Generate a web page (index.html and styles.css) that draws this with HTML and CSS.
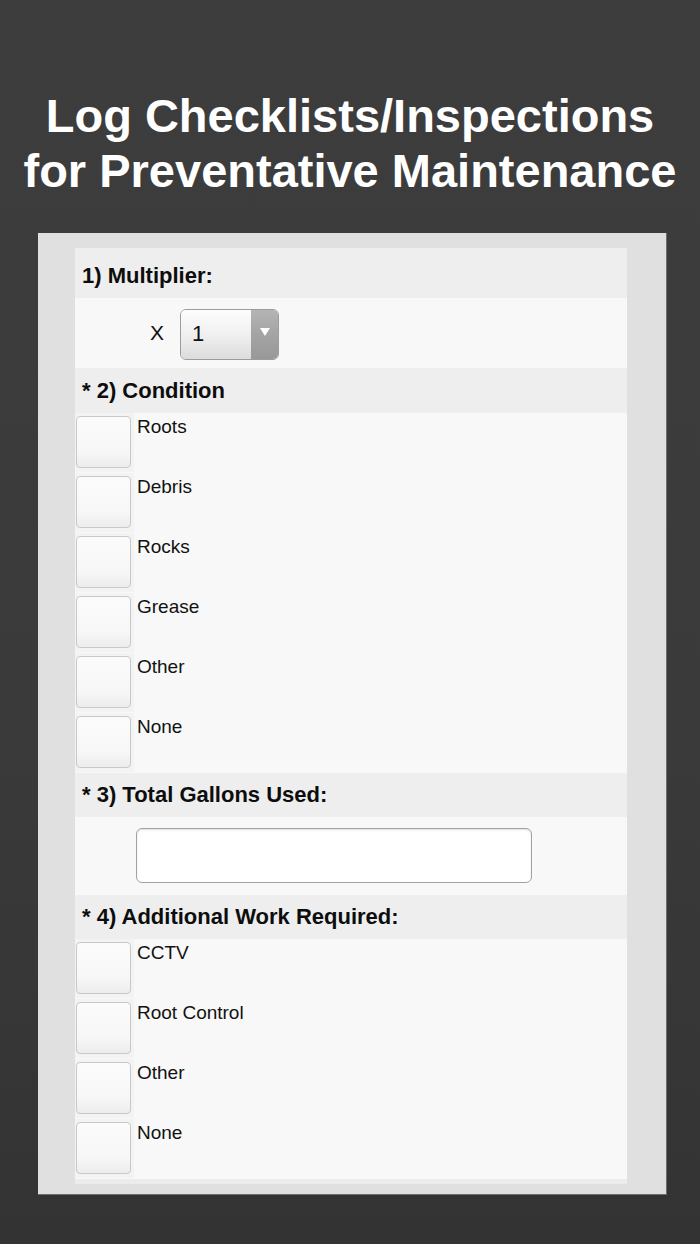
FILE: index.html
```html
<!DOCTYPE html>
<html>
<head>
<meta charset="utf-8">
<link rel="stylesheet" href="styles.css">
</head>
<body>
<h1 class="title">Log Checklists/Inspections<br>for Preventative Maintenance</h1>
<div class="frame">
  <div class="panel">
    <div class="head head-first">1) Multiplier:</div>
    <div class="mult-row">
      <span class="mult-x">X</span>
      <div class="select">
        <div class="select-val">1</div>
        <div class="select-arrow"><span class="tri"></span></div>
      </div>
    </div>
    <div class="head head-tall">* 2) Condition</div>
    <div class="opt"><div class="cell"><div class="box"></div></div><span class="lbl">Roots</span></div>
    <div class="opt"><div class="cell"><div class="box"></div></div><span class="lbl">Debris</span></div>
    <div class="opt"><div class="cell"><div class="box"></div></div><span class="lbl">Rocks</span></div>
    <div class="opt"><div class="cell"><div class="box"></div></div><span class="lbl">Grease</span></div>
    <div class="opt"><div class="cell"><div class="box"></div></div><span class="lbl">Other</span></div>
    <div class="opt"><div class="cell"><div class="box"></div></div><span class="lbl">None</span></div>
    <div class="head">* 3) Total Gallons Used:</div>
    <div class="input-row"><div class="text-input"></div></div>
    <div class="head">* 4) Additional Work Required:</div>
    <div class="opt"><div class="cell"><div class="box"></div></div><span class="lbl">CCTV</span></div>
    <div class="opt"><div class="cell"><div class="box"></div></div><span class="lbl">Root Control</span></div>
    <div class="opt"><div class="cell"><div class="box"></div></div><span class="lbl">Other</span></div>
    <div class="opt"><div class="cell"><div class="box"></div></div><span class="lbl">None</span></div>
  </div>
</div>
</body>
</html>
```

FILE: styles.css
```css
html, body {
  margin: 0;
  padding: 0;
}
body {
  width: 700px;
  height: 1244px;
  overflow: hidden;
  background: linear-gradient(to bottom, #3d3d3d 0%, #3a3a3a 60%, #333333 100%);
  font-family: "Liberation Sans", Arial, sans-serif;
  color: #111;
}
.title {
  margin: 0;
  padding-top: 88px;
  text-align: center;
  font-size: 47px;
  line-height: 55px;
  font-weight: bold;
  color: #ffffff;
}
.frame {
  box-sizing: border-box;
  margin: 35px 0 0 38px;
  width: 629px;
  padding: 15px 39px 10px 37px;
  background: #e0e0e0;
  border-right: 1px solid #6e6e6e;
  border-bottom: 1px solid #6e6e6e;
}
.panel {
  background: #f8f8f8;
  border-bottom: 5px solid #ececec;
}
.head {
  box-sizing: border-box;
  height: 44px;
  display: flex;
  align-items: center;
  padding-left: 7px;
  background: #eeeeee;
  font-size: 22px;
  font-weight: bold;
  color: #0d0d0d;
}
.head-first {
  height: 50px;
  padding-top: 6px;
}
.head-tall {
  height: 45px;
}
.mult-row {
  height: 70px;
  display: flex;
  align-items: center;
  padding-left: 75px;
}
.mult-x {
  font-size: 21px;
  color: #111;
}
.select {
  margin-left: 16px;
  margin-top: 2px;
  width: 99px;
  height: 51px;
  box-sizing: border-box;
  border: 1px solid #9c9c9c;
  border-radius: 6px;
  display: flex;
  overflow: hidden;
}
.select-val {
  flex: 1;
  background: linear-gradient(to bottom, #fdfdfd 0%, #f0f0f0 50%, #dcdcdc 100%);
  font-size: 22px;
  line-height: 47px;
  padding-left: 11px;
  color: #111;
}
.select-arrow {
  width: 27px;
  background: linear-gradient(to bottom, #b4b4b4 0%, #a4a4a4 50%, #989898 100%);
  display: flex;
  justify-content: center;
  padding-top: 18px;
  box-sizing: border-box;
}
.tri {
  width: 0;
  height: 0;
  border-left: 5px solid transparent;
  border-right: 5px solid transparent;
  border-top: 8px solid #ffffff;
}
.opt {
  height: 60px;
  display: flex;
  align-items: flex-start;
}
.cell {
  box-sizing: border-box;
  width: 59px;
  height: 59px;
  padding: 3px 0 0 1px;
  background: #f3f3f3;
}
.box {
  box-sizing: border-box;
  width: 55px;
  height: 52px;
  border: 1px solid #c8c8c8;
  border-radius: 4px;
  background: linear-gradient(to bottom, #fbfbfb 0%, #f7f7f7 70%, #ececec 100%);
}
.lbl {
  margin-left: 3px;
  margin-top: 3px;
  font-size: 19px;
  line-height: 22px;
  color: #111;
}
.input-row {
  height: 78px;
  display: flex;
  align-items: center;
  padding-left: 61px;
}
.text-input {
  box-sizing: border-box;
  width: 396px;
  height: 55px;
  margin-bottom: 1px;
  background: #ffffff;
  border: 1px solid #a2a2a2;
  border-radius: 6px;
  box-shadow: inset 0 1px 2px rgba(0,0,0,0.12);
}
```
